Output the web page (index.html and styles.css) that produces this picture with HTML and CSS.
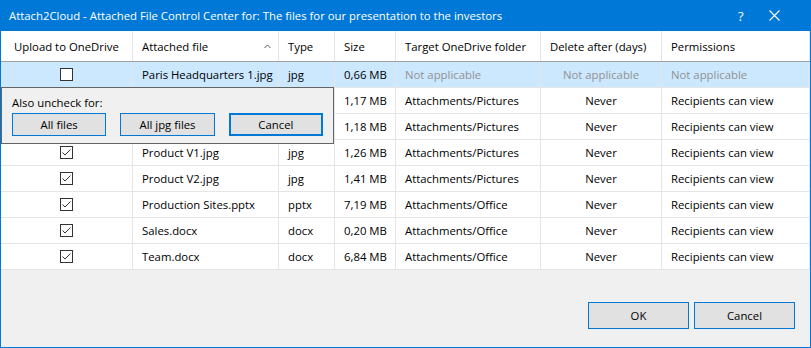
FILE: index.html
```html
<!DOCTYPE html>
<html>
<head>
<meta charset="utf-8">
<link rel="stylesheet" href="styles.css">
</head>
<body>
<div class="window">
  <div class="titlebar">
    <span class="title">Attach2Cloud - Attached File Control Center for: The files for our presentation to the investors</span>
    <span class="tb-help">?</span>
    <span class="tb-close"><svg width="11" height="11" viewBox="0 0 11 11"><path d="M0.5 0.5 L10.5 10.5 M10.5 0.5 L0.5 10.5" stroke="#fff" stroke-width="1.1" fill="none"/></svg></span>
  </div>
  <div class="grid">
    <div class="row head">
      <div class="c c1">Upload to OneDrive</div>
      <div class="c c2">Attached file<svg class="sort" width="7" height="5" viewBox="0 0 7 5"><path d="M0.5 4 L3.5 1 L6.5 4" stroke="#555" stroke-width="1" fill="none"/></svg></div>
      <div class="c">Type</div>
      <div class="c">Size</div>
      <div class="c">Target OneDrive folder</div>
      <div class="c">Delete after (days)</div>
      <div class="c">Permissions</div>
    </div>
    <div class="row sel">
      <div class="c c1 cb-cell"><span class="cb"></span></div>
      <div class="c c2">Paris Headquarters 1.jpg</div>
      <div class="c">jpg</div>
      <div class="c">0,66 MB</div>
      <div class="c na">Not applicable</div>
      <div class="c na ctr">Not applicable</div>
      <div class="c na">Not applicable</div>
    </div>
    <div class="row">
      <div class="c c1 cb-cell"></div>
      <div class="c c2"></div>
      <div class="c"></div>
      <div class="c">1,17 MB</div>
      <div class="c">Attachments/Pictures</div>
      <div class="c ctr">Never</div>
      <div class="c">Recipients can view</div>
    </div>
    <div class="row">
      <div class="c c1 cb-cell"></div>
      <div class="c c2"></div>
      <div class="c"></div>
      <div class="c">1,18 MB</div>
      <div class="c">Attachments/Pictures</div>
      <div class="c ctr">Never</div>
      <div class="c">Recipients can view</div>
    </div>
    <div class="row">
      <div class="c c1 cb-cell"><span class="cb on"><svg width="11" height="11" viewBox="0 0 11 11"><path d="M1.5 5.5 L4 8 L9.5 2.5" stroke="#333" stroke-width="1" fill="none"/></svg></span></div>
      <div class="c c2">Product V1.jpg</div>
      <div class="c">jpg</div>
      <div class="c">1,26 MB</div>
      <div class="c">Attachments/Pictures</div>
      <div class="c ctr">Never</div>
      <div class="c">Recipients can view</div>
    </div>
    <div class="row">
      <div class="c c1 cb-cell"><span class="cb on"><svg width="11" height="11" viewBox="0 0 11 11"><path d="M1.5 5.5 L4 8 L9.5 2.5" stroke="#333" stroke-width="1" fill="none"/></svg></span></div>
      <div class="c c2">Product V2.jpg</div>
      <div class="c">jpg</div>
      <div class="c">1,41 MB</div>
      <div class="c">Attachments/Pictures</div>
      <div class="c ctr">Never</div>
      <div class="c">Recipients can view</div>
    </div>
    <div class="row">
      <div class="c c1 cb-cell"><span class="cb on"><svg width="11" height="11" viewBox="0 0 11 11"><path d="M1.5 5.5 L4 8 L9.5 2.5" stroke="#333" stroke-width="1" fill="none"/></svg></span></div>
      <div class="c c2">Production Sites.pptx</div>
      <div class="c">pptx</div>
      <div class="c">7,19 MB</div>
      <div class="c">Attachments/Office</div>
      <div class="c ctr">Never</div>
      <div class="c">Recipients can view</div>
    </div>
    <div class="row">
      <div class="c c1 cb-cell"><span class="cb on"><svg width="11" height="11" viewBox="0 0 11 11"><path d="M1.5 5.5 L4 8 L9.5 2.5" stroke="#333" stroke-width="1" fill="none"/></svg></span></div>
      <div class="c c2">Sales.docx</div>
      <div class="c">docx</div>
      <div class="c">0,20 MB</div>
      <div class="c">Attachments/Office</div>
      <div class="c ctr">Never</div>
      <div class="c">Recipients can view</div>
    </div>
    <div class="row">
      <div class="c c1 cb-cell"><span class="cb on"><svg width="11" height="11" viewBox="0 0 11 11"><path d="M1.5 5.5 L4 8 L9.5 2.5" stroke="#333" stroke-width="1" fill="none"/></svg></span></div>
      <div class="c c2">Team.docx</div>
      <div class="c">docx</div>
      <div class="c">6,84 MB</div>
      <div class="c">Attachments/Office</div>
      <div class="c ctr">Never</div>
      <div class="c">Recipients can view</div>
    </div>
    <div class="popup">
      <div class="popup-label">Also uncheck for:</div>
      <div class="popup-buttons">
        <button class="btn">All files</button>
        <button class="btn">All jpg files</button>
        <button class="btn focus">Cancel</button>
      </div>
    </div>
  </div>
  <div class="footer">
    <button class="btn big">OK</button>
    <button class="btn big">Cancel</button>
  </div>
</div>
</body>
</html>
```
FILE: styles.css
```css
* { box-sizing: border-box; }
html, body { margin: 0; padding: 0; }
body {
  width: 811px;
  height: 348px;
  overflow: hidden;
  font-family: "Open Sans", "Noto Sans", sans-serif;
  font-size: 11.35px;
  color: #000;
  background: #f0f0f0;
}
.window {
  width: 811px;
  height: 348px;
  border: 1px solid #0078d7;
  border-top: none;
  display: flex;
  flex-direction: column;
  background: #f0f0f0;
}
.titlebar {
  height: 31px;
  margin: 0 -1px;
  background: #0078d7;
  color: #fff;
  display: flex;
  align-items: center;
  padding-left: 9px;
  flex: none;
}
.title { flex: 1; white-space: nowrap; }
.tb-help { width: 14px; margin-right: 17px; font-size: 13px; }
.tb-close { width: 11px; height: 11px; margin-right: 31px; display: flex; }
.grid {
  position: relative;
  background: #fff;
  flex: none;
}
.row {
  display: grid;
  grid-template-columns: 132px 146px 56px 61px 145px 121px 148px;
  height: 26px;
  border-bottom: 1px solid #e5e5e5;
}
.row.head {
  height: 31px;
  border-bottom: 1px solid #a0a0a0;
}
.row.sel { background: #cce8ff; }
.c {
  border-right: 1px solid #e5e5e5;
  padding-left: 9px;
  display: flex;
  align-items: center;
  white-space: nowrap;
  overflow: hidden;
}
.c1 { padding-left: 13px; }
.c2 { position: relative; }
.sort { position: absolute; left: 131px; top: 13px; }
.ctr { justify-content: center; padding-left: 0; }
.na { color: #929292; }
.cb-cell { justify-content: center; padding-left: 0; }
.cb {
  width: 13px;
  height: 13px;
  border: 1px solid #333;
  background: #fff;
  display: flex;
  align-items: center;
  justify-content: center;
}
.cb svg { display: block; }
.popup {
  position: absolute;
  left: 0;
  top: 56px;
  width: 333px;
  height: 57px;
  background: #f0f0f0;
  border: 1px solid #646464;
  padding: 5px 10px 0 10px;
}
.popup-label { height: 19px; line-height: 19px; }
.popup-buttons {
  display: flex;
  gap: 14px;
  margin-top: 1px;
}
.btn {
  font-family: inherit;
  font-size: 11.35px;
  color: #000;
  background: #e1e1e1;
  border: 1px solid #0078d7;
  width: 96px;
  height: 23px;
  padding: 0;
  margin: 0;
}
.btn.focus { border: 2px solid #0078d7; }
.footer {
  flex: 1;
  display: flex;
  justify-content: flex-end;
  align-items: flex-start;
  gap: 5px;
  padding-top: 32px;
  padding-right: 15px;
}
.btn.big { width: 101px; height: 27px; }
```
